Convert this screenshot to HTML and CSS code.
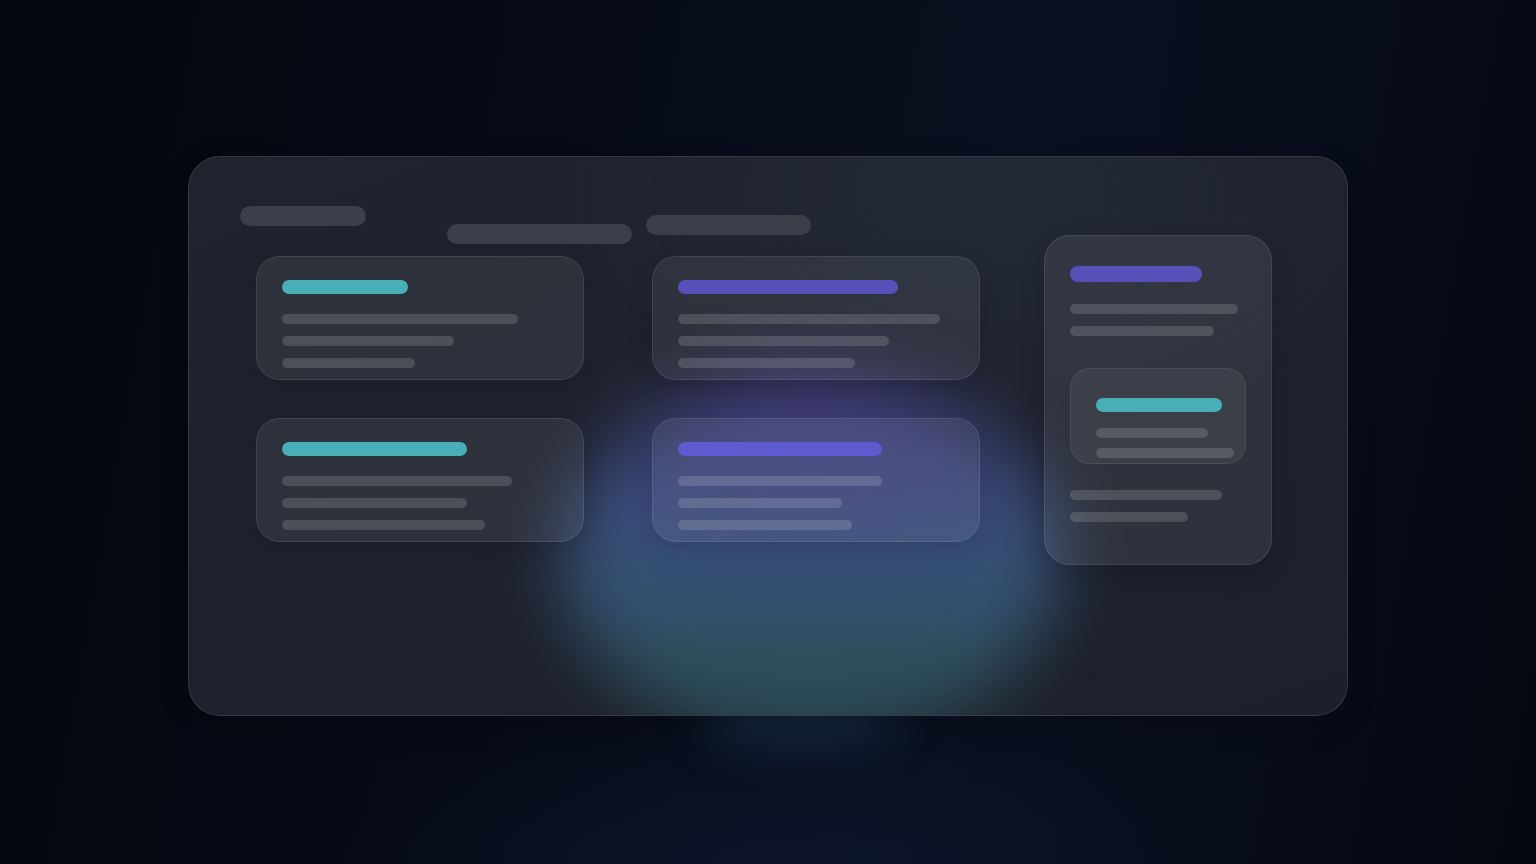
FILE: index.html
```html
<!DOCTYPE html>
<html lang="en">
<head>
<meta charset="utf-8">
<title>Glass board</title>
<link rel="stylesheet" href="styles.css">
</head>
<body>
<div class="stage">
  <div class="outer-glow"></div>
  <div class="panel">
    <div class="glow"></div>
    <div class="main">
      <div class="pills">
        <span class="pill pill-a"></span>
        <span class="pill pill-b"></span>
        <span class="pill pill-c"></span>
      </div>
      <div class="cards">
        <div class="card">
          <span class="bar teal" style="width:126px"></span>
          <div class="lines">
            <span class="line" style="width:236px"></span>
            <span class="line" style="width:172px"></span>
            <span class="line" style="width:133px"></span>
          </div>
        </div>
        <div class="card">
          <span class="bar purple" style="width:220px"></span>
          <div class="lines">
            <span class="line" style="width:262px"></span>
            <span class="line" style="width:211px"></span>
            <span class="line" style="width:177px"></span>
          </div>
        </div>
        <div class="card">
          <span class="bar teal" style="width:185px"></span>
          <div class="lines">
            <span class="line" style="width:230px"></span>
            <span class="line" style="width:185px"></span>
            <span class="line" style="width:203px"></span>
          </div>
        </div>
        <div class="card">
          <span class="bar purple bright" style="width:204px"></span>
          <div class="lines">
            <span class="line" style="width:204px"></span>
            <span class="line" style="width:164px"></span>
            <span class="line" style="width:174px"></span>
          </div>
        </div>
      </div>
    </div>
    <div class="side">
      <span class="bar purple tall" style="width:132px"></span>
      <div class="lines side-lines">
        <span class="line" style="width:168px"></span>
        <span class="line" style="width:144px"></span>
      </div>
      <div class="inner">
        <span class="bar teal" style="width:126px"></span>
        <div class="lines inner-lines">
          <span class="line" style="width:112px"></span>
          <span class="line" style="width:138px"></span>
        </div>
      </div>
      <div class="lines side-lines bottom">
        <span class="line" style="width:152px"></span>
        <span class="line" style="width:118px"></span>
      </div>
    </div>
  </div>
</div>
</body>
</html>
```
FILE: styles.css
```css
* { box-sizing: border-box; }
html, body { margin: 0; padding: 0; }
body {
  width: 1536px;
  height: 864px;
  overflow: hidden;
  font-family: "Inter", "Liberation Sans", sans-serif;
  background:
    radial-gradient(ellipse 560px 200px at 780px 880px, rgba(14, 22, 44, 0.8), rgba(14, 22, 44, 0) 80%),
    linear-gradient(100deg, #03060d 0%, #060b17 35%, #09101f 62%, #080d1b 80%, #04070f 100%);
}
.stage {
  position: relative;
  width: 1536px;
  height: 864px;
  padding: 156px 0 0 188px;
}
.outer-glow {
  position: absolute;
  left: 700px;
  top: 690px;
  width: 200px;
  height: 60px;
  border-radius: 50%;
  background: rgba(40, 80, 110, 0.35);
  filter: blur(22px);
}
.panel {
  position: relative;
  width: 1160px;
  height: 560px;
  border-radius: 32px;
  border: 1px solid rgba(255, 255, 255, 0.1);
  background:
    radial-gradient(ellipse 520px 300px at 800px 40px, rgba(38, 48, 64, 0.55), rgba(38, 48, 64, 0) 80%),
    linear-gradient(160deg, #1f232d 0%, #1e222d 50%, #1c202b 100%);
  overflow: hidden;
  display: flex;
  align-items: flex-start;
  padding: 49px 0 0 51px;
  box-shadow: 0 10px 30px rgba(0, 0, 0, 0.15);
}
.glow {
  position: absolute;
  left: 372px;
  top: 212px;
  width: 500px;
  height: 380px;
  border-radius: 50%;
  background:
    radial-gradient(ellipse 55% 40% at 50% 15%, rgba(74, 66, 140, 0.85), rgba(74, 66, 140, 0) 100%),
    linear-gradient(180deg, #36396a 0%, #3d5486 35%, #3a5a82 55%, #30555f 80%, #2c4e56 100%);
  filter: blur(34px);
  opacity: 0.85;
}
.main {
  position: relative;
  width: 740px;
  display: flex;
  flex-direction: column;
}
.pills {
  display: flex;
  align-items: flex-start;
  height: 38px;
}
.pill {
  display: block;
  height: 20px;
  border-radius: 10px;
  background: #3b3f4a;
}
.pill-a { width: 126px; }
.pill-b { width: 185px; margin: 18px 0 0 81px; }
.pill-c { width: 165px; margin: 9px 0 0 14px; }
.cards {
  margin: 12px 0 0 16px;
  display: grid;
  grid-template-columns: 328px 328px;
  grid-auto-rows: 124px;
  column-gap: 68px;
  row-gap: 38px;
}
.card {
  border-radius: 24px;
  border: 1px solid rgba(255, 255, 255, 0.09);
  background: rgba(255, 255, 255, 0.07);
  padding: 23px 25px;
  box-shadow: 0 8px 24px rgba(0, 0, 0, 0.12);
}
.bar {
  display: block;
  height: 14px;
  border-radius: 7px;
}
.bar.tall { height: 16px; border-radius: 8px; }
.teal { background: #48aeb7; }
.purple { background: #5850b9; }
.purple.bright { background: #5e5bd0; }
.lines {
  display: flex;
  flex-direction: column;
  gap: 12px;
  margin-top: 20px;
}
.line {
  display: block;
  height: 10px;
  border-radius: 5px;
  background: rgba(255, 255, 255, 0.15);
}
.side {
  position: relative;
  margin: 29px 0 0 64px;
  width: 228px;
  height: 330px;
  border-radius: 26px;
  border: 1px solid rgba(255, 255, 255, 0.09);
  background: rgba(255, 255, 255, 0.08);
  padding: 30px 0 0 25px;
  box-shadow: 0 8px 24px rgba(0, 0, 0, 0.15);
}
.side-lines { margin-top: 22px; }
.side-lines.bottom { margin-top: 26px; }
.inner {
  margin-top: 32px;
  width: 176px;
  height: 96px;
  border-radius: 20px;
  border: 1px solid rgba(255, 255, 255, 0.08);
  background: rgba(255, 255, 255, 0.06);
  padding: 29px 0 0 25px;
}
.inner-lines { margin-top: 16px; gap: 10px; }
```
